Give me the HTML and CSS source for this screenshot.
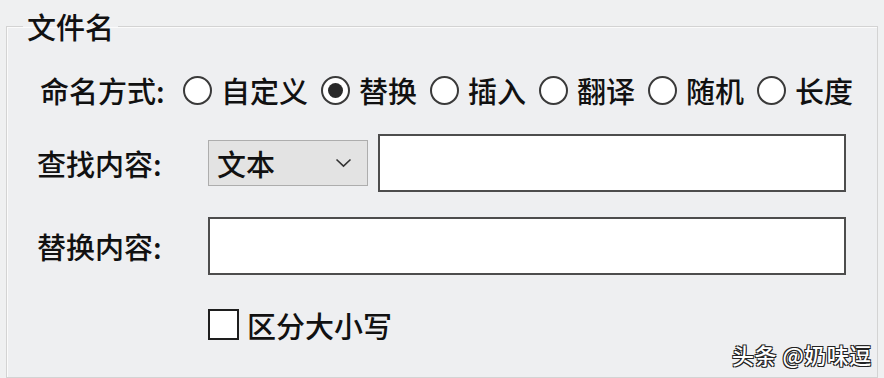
FILE: index.html
```html
<!DOCTYPE html>
<html lang="zh-CN">
<head>
<meta charset="utf-8">
<title>文件名</title>
<link rel="stylesheet" href="styles.css">
</head>
<body>
<fieldset class="group">
  <legend class="group-title">文件名</legend>

  <div class="row row-mode">
    <span class="label label-mode">命名方式:</span>
    <span class="opt"><span class="radio"></span><span class="opt-text">自定义</span></span>
    <span class="opt"><span class="radio checked"></span><span class="opt-text">替换</span></span>
    <span class="opt"><span class="radio"></span><span class="opt-text">插入</span></span>
    <span class="opt"><span class="radio"></span><span class="opt-text">翻译</span></span>
    <span class="opt"><span class="radio"></span><span class="opt-text">随机</span></span>
    <span class="opt"><span class="radio"></span><span class="opt-text">长度</span></span>
  </div>

  <div class="row row-find">
    <span class="label label-field">查找内容:</span>
    <span class="select">
      <span class="select-text">文本</span>
      <svg class="chevron" width="17" height="10" viewBox="0 0 17 10"><polyline points="1.5,1.5 8.5,8.2 15.5,1.5" fill="none" stroke="#333" stroke-width="1.6"/></svg>
    </span>
    <span class="textbox textbox-find"></span>
  </div>

  <div class="row row-replace">
    <span class="label label-field">替换内容:</span>
    <span class="textbox textbox-replace"></span>
  </div>

  <div class="row row-case">
    <span class="checkbox"></span>
    <span class="check-text">区分大小写</span>
  </div>
</fieldset>
<div class="watermark">头条 @奶味逗</div>
</body>
</html>
```
FILE: styles.css
```css
html, body {
  margin: 0;
  padding: 0;
  background: #eff0f1;
}
body {
  width: 884px;
  height: 378px;
  overflow: hidden;
  position: relative;
  font-family: "Noto Sans CJK SC", "Noto Sans", sans-serif;
  font-weight: 500;
  color: #111;
}
.group {
  box-sizing: border-box;
  margin: 8px 0 0 6px;
  width: 872px;
  height: 370px;
  padding: 0;
  border: 1px solid #d3d3d3;
  box-shadow: inset 1px 1px 0 #fbfbfb;
  background: #eeeff1;
}
.group-title {
  margin-left: 16px;
  padding: 0 4px;
  font-size: 29px;
  line-height: 36px;
}
.row {
  display: flex;
  align-items: center;
}
.label {
  font-size: 29px;
  line-height: 40px;
  flex: none;
}
.row-mode {
  margin-top: 26px;
  padding-left: 33px;
  height: 40px;
}
.label-mode {
  width: 143px;
}
.opt {
  display: flex;
  align-items: center;
  margin-right: 13px;
}
.radio {
  box-sizing: border-box;
  width: 29px;
  height: 29px;
  border: 2px solid #3a3a3a;
  border-radius: 50%;
  background: #fff;
  margin-right: 9px;
  display: flex;
  align-items: center;
  justify-content: center;
}
.radio.checked::after {
  content: "";
  width: 15px;
  height: 15px;
  border-radius: 50%;
  background: #2a2a2a;
}
.opt-text {
  font-size: 29px;
  line-height: 40px;
  white-space: nowrap;
}
.row-find {
  margin-top: 24px;
  padding-left: 30px;
  height: 58px;
}
.label-field {
  width: 171px;
}
.select {
  box-sizing: border-box;
  width: 160px;
  height: 46px;
  border: 1px solid #adadad;
  background: #e3e3e3;
  display: flex;
  align-items: center;
  justify-content: space-between;
  padding: 0 15px 0 8px;
  margin-right: 10px;
}
.select-text {
  font-size: 29px;
  line-height: 40px;
}
.textbox {
  box-sizing: border-box;
  height: 58px;
  border: 2px solid #4d4d4d;
  background: #fff;
}
.textbox-find {
  width: 468px;
}
.row-replace {
  margin-top: 25px;
  padding-left: 30px;
  height: 58px;
}
.textbox-replace {
  width: 638px;
}
.row-case {
  margin-top: 34px;
  padding-left: 201px;
  height: 31px;
}
.checkbox {
  box-sizing: border-box;
  width: 31px;
  height: 31px;
  border: 2px solid #1e1e1e;
  background: #fff;
  margin-right: 8px;
}
.check-text {
  font-size: 29px;
  line-height: 40px;
}
.watermark {
  position: absolute;
  left: 732px;
  top: 339px;
  font-size: 22px;
  line-height: 30px;
  letter-spacing: 0.5px;
  color: #fff;
  white-space: nowrap;
  text-shadow: 1px 1px 0 #222, -1px -1px 0 #222, 1px -1px 0 #222, -1px 1px 0 #222;
}
```
